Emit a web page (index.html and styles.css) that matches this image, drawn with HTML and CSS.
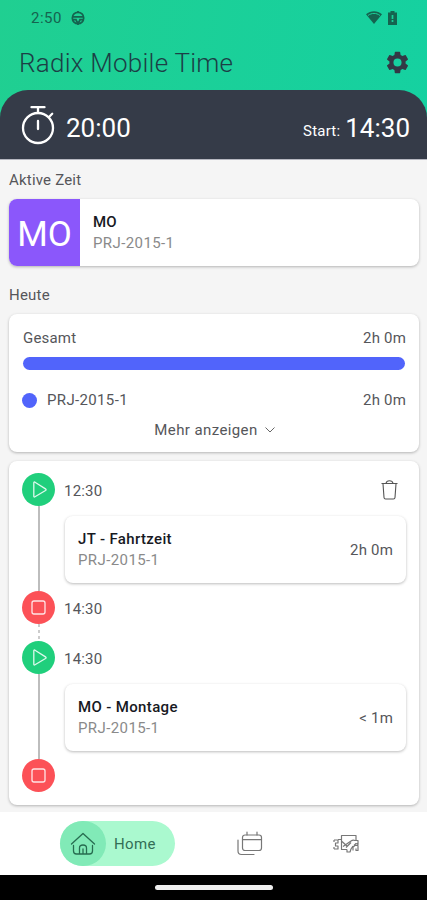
FILE: index.html
```html
<!DOCTYPE html>
<html lang="de">
<head>
<meta charset="utf-8">
<title>Radix Mobile Time</title>
<link rel="stylesheet" href="styles.css">
</head>
<body>
<div class="app">
  <header class="header">
    <div class="status">
      <span class="clock">2:50</span>
      <svg class="status-face" width="14" height="14" viewBox="0 0 14 14" fill="none" stroke="currentColor" stroke-width="1.7"><circle cx="7" cy="7" r="5.7"/><path d="M1.5 5.8h11M2 8.7h3l1 2.4h2l1-2.4h3M7 0v2M7 12v2"/></svg>
      <svg class="wifi" width="16" height="13" viewBox="0 0 16 13"><path d="M0 3.2C4.7-.9 11.3-.9 16 3.2L8 13z" fill="currentColor"/><path d="M2 4.5c3.8-2.8 8.2-2.8 12 0" fill="none" stroke="#1acf99" stroke-width="1"/></svg>
      <svg class="battery" width="9" height="14" viewBox="0 0 9 14"><path d="M2.5 0h4v1.5H9V14H0V1.5h2.5z" fill="currentColor"/><path d="M4.5 4v4M4.500 9v2" stroke="#1acf99" stroke-width="1.7"/></svg>
    </div>
    <div class="title-row">
      <h1>Radix Mobile Time</h1>
      <svg width="27" height="27" viewBox="0 0 24 24" fill="#333845"><path d="M19.14 12.94c.04-.3.06-.61.06-.94 0-.32-.02-.64-.07-.94l2.03-1.58a.49.49 0 0 0 .12-.61l-1.92-3.32a.49.49 0 0 0-.59-.22l-2.39.96c-.5-.38-1.03-.7-1.62-.94l-.36-2.54a.48.48 0 0 0-.48-.41h-3.84c-.24 0-.43.17-.47.41l-.36 2.54c-.59.24-1.13.57-1.62.94l-2.39-.96a.48.48 0 0 0-.59.22L2.74 8.87c-.12.21-.08.47.12.61l2.03 1.58c-.05.3-.09.63-.09.94s.02.64.07.94l-2.03 1.58a.49.49 0 0 0-.12.61l1.92 3.32c.12.22.37.29.59.22l2.39-.96c.5.38 1.03.7 1.62.94l.36 2.54c.05.24.24.41.48.41h3.84c.24 0 .44-.17.47-.41l.36-2.54c.59-.24 1.13-.56 1.62-.94l2.39.96c.22.08.47 0 .59-.22l1.92-3.32a.48.48 0 0 0-.12-.61zM12 15.6a3.6 3.6 0 1 1 0-7.2 3.6 3.6 0 0 1 0 7.2z"/></svg>
    </div>
    <div class="timer">
      <svg width="34" height="40" viewBox="0 0 34 40" fill="none" stroke="#fff" stroke-width="2.3" stroke-linecap="round"><circle cx="17" cy="23" r="15"/><path d="M10.500 2.200h13M17 3v5M28 12l3.200-3.200M17 16v8"/></svg>
      <span class="elapsed">20:00</span>
      <span class="start">Start:</span>
      <span class="start-time">14:30</span>
    </div>
  </header>
  <main class="content">
    <h2 class="label">Aktive Zeit</h2>
    <section class="card active">
      <div class="badge">MO</div>
      <div class="desc"><b>MO</b><span>PRJ-2015-1</span></div>
    </section>
    <h2 class="label today">Heute</h2>
    <section class="card summary">
      <div class="row"><span>Gesamt</span><span>2h 0m</span></div>
      <div class="bar"></div>
      <div class="row"><i class="dot"></i><span class="grow">PRJ-2015-1</span><span>2h 0m</span></div>
      <div class="more"><span>Mehr anzeigen</span><svg width="10" height="6" viewBox="0 0 10 6" fill="none" stroke="#666" stroke-width="1"><path d="M.5.500 5 5 9.500.5"/></svg></div>
    </section>
    <section class="card timeline">
      <div class="event">
        <svg class="node" viewBox="0 0 33 33"><circle cx="16.500" cy="16.500" r="16.500" fill="#20cf7c"/><path class="glyph" d="M11.800 9.800v13.400q0 1.300 1.200.6l10.500-6.300q1.200-.8 0-1.600L13 9.200q-1.200-.6-1.200.6z"/></svg>
        <span class="time">12:30</span>
        <svg width="17" height="20" viewBox="0 0 17 20" fill="none" stroke="#555" stroke-width="1.100"><path d="M.5 3.500h16M5 3.300Q5.500.8 8.500.8T12 3.300M2 3.700l1 13.800q.1 1.500 1.600 1.500h7.800q1.500 0 1.600-1.500l1-13.800"/></svg>
      </div>
      <div class="span">
        <div class="track"></div>
        <div class="card entry"><div class="desc"><b>JT - Fahrtzeit</b><span>PRJ-2015-1</span></div><span>2h 0m</span></div>
      </div>
      <div class="event">
        <svg class="node" viewBox="0 0 33 33"><circle cx="16.500" cy="16.500" r="16.500" fill="#fc5157"/><rect class="glyph" x="10" y="10" width="13" height="13" rx="2"/></svg>
        <span class="time">14:30</span>
      </div>
      <div class="gap"></div>
      <div class="event">
        <svg class="node" viewBox="0 0 33 33"><circle cx="16.500" cy="16.500" r="16.500" fill="#20cf7c"/><path class="glyph" d="M11.800 9.800v13.400q0 1.300 1.200.6l10.500-6.300q1.200-.8 0-1.600L13 9.200q-1.200-.6-1.200.6z"/></svg>
        <span class="time">14:30</span>
      </div>
      <div class="span">
        <div class="track"></div>
        <div class="card entry"><div class="desc"><b>MO - Montage</b><span>PRJ-2015-1</span></div><span>&lt; 1m</span></div>
      </div>
      <div class="event">
        <svg class="node" viewBox="0 0 33 33"><circle cx="16.500" cy="16.500" r="16.500" fill="#fc5157"/><rect class="glyph" x="10" y="10" width="13" height="13" rx="2"/></svg>
      </div>
    </section>
  </main>
  <nav class="tabs">
    <div class="home">
      <div class="home-icon"><svg width="26" height="24" viewBox="0 0 26 24" fill="none" stroke="#276c50" stroke-width="1.300" stroke-linecap="round" stroke-linejoin="round"><path d="M1.500 12 13 1.500 24.500 12M3.500 13.500V19q0 3 3 3h13q3 0 3-3v-5.500M9.500 22v-6q0-3 3.500-3t3.500 3v6M13 17v5"/></svg></div>
      <span>Home</span>
    </div>
    <svg class="calendar" width="26" height="25" viewBox="0 0 26 25" fill="none" stroke="#777" stroke-width="1.200" stroke-linecap="round"><rect x="5.500" y="4" width="19" height="15.500" rx="2.500"/><path d="M5.500 8.700h19M10 1v3M20 1v3M1 9v11q0 3.500 3.500 3.500H17"/></svg>
    <svg class="projects" width="26" height="22" viewBox="0 0 26 22" fill="none" stroke="#777" stroke-width="1.200" stroke-linejoin="round"><path d="M8.500 16.500v-14h14.500v4.500M1 7h4v3H2.500v3H5v3H1M1 7v2M1 14v2M8 6.500H5M8 16.500h6M9 8.500l5 4.500M10 13.500l8-5.500q2-1.500 4-.5h3v4l-2-1-2 2M18 9.500l-5 5M14 16.500v2.500h3l1-3 2-3M20 17.500v-3.500l2-1.500h3v5h-2v-2"/></svg>
  </nav>
  <footer class="system"><div class="handle"></div></footer>
</div>
</body>
</html>
```
FILE: styles.css
```css
* { box-sizing: border-box; }
body { margin: 0; background: #f5f5f5; color: #55565a; font: 15px/20px Roboto, "Liberation Sans", sans-serif; letter-spacing: .2px; }
.app { width: 427px; height: 900px; display: flex; flex-direction: column; overflow: hidden; }
.header { height: 160px; flex: none; background: linear-gradient(100deg, #20cf91, #15d1a1); border-bottom: 1px solid #b6b7c0; }
.status { height: 35px; display: flex; align-items: center; padding: 0 30px 0 31px; color: #15634f; }
.clock { font-size: 15px; letter-spacing: .5px; }
.status-face { margin-left: 9px; }
.wifi { margin-left: auto; }
.battery { margin-left: 6px; }
.title-row { height: 55px; display: flex; align-items: center; justify-content: space-between; padding: 0 16px 0 19px; }
h1 { margin: 0; font-size: 26px; line-height: 30px; font-weight: 300; color: #1c3f46; letter-spacing: .25px; }
.timer { height: 69px; display: flex; align-items: center; padding: 3px 17px 0 21px; border-radius: 28px 28px 0 0; background: #353b48; color: #fff; letter-spacing: 0; }
.timer svg { margin-top: -3px; }
.elapsed { margin: 4px 0 0 11px; font-size: 26px; line-height: 30px; }
.start { margin: 9px 5px 0 auto; font-size: 15px; letter-spacing: .2px; }
.start-time { margin-top: 4px; font-size: 26px; line-height: 30px; }
.content { height: 652px; flex: none; padding: 10px 8px 0 9px; }
.label { margin: 0 0 9px; font-size: 15px; line-height: 20px; font-weight: 400; }
.today { margin: 19px 0 9px; }
.card { background: #fff; border-radius: 8px; box-shadow: 0 1px 3px rgba(0,0,0,.27); }
.active { height: 67px; display: flex; align-items: center; overflow: hidden; }
.badge { width: 71px; height: 67px; display: flex; align-items: center; justify-content: center; background: #8b57fb; color: #fff; font-size: 35px; letter-spacing: 0; padding-top: 4px; }
.desc { display: flex; flex-direction: column; line-height: 21px; padding-top: 1px; }
.desc b { font-weight: 500; color: #17191f; }
.desc span { color: #8a8a8a; letter-spacing: .4px; }
.active .desc { margin-left: 13px; }
.summary { height: 138px; padding: 14px 13px 0 14px; }
.row { display: flex; align-items: center; justify-content: space-between; }
.bar { height: 13px; margin: 9px 1px 20px 0; border-radius: 7px; background: #5164fb; }
.dot { width: 15px; height: 15px; margin-left: -1px; border-radius: 50%; background: #5164fb; }
.grow { flex: 1; margin-left: 10px; letter-spacing: .35px; }
.more { margin-top: 10px; display: flex; justify-content: center; align-items: center; gap: 7px; letter-spacing: .4px; }
.timeline { height: 344px; margin-top: 9px; padding: 12px 13px 0; }
.event { height: 33px; display: flex; align-items: center; padding-right: 8px; }
.node { width: 33px; height: 33px; }
.glyph { fill: none; stroke: #fff; stroke-opacity: .85; stroke-width: 1.300; }
.time { flex: 1; margin-left: 9px; padding-top: 2px; }
.span { height: 85px; display: flex; }
.track { width: 2px; height: 85px; margin: 0 25px 0 16px; background: #bdbdbd; flex: none; }
.entry { flex: 1; height: 67px; margin-top: 10px; padding: 0 13px; display: flex; align-items: center; justify-content: space-between; }
.entry b { letter-spacing: .35px; }
.gap { width: 2px; height: 17px; margin-left: 16px; background: repeating-linear-gradient(#ccc 0 3px, #fff 3px 6px); }
.tabs { height: 63px; flex: none; background: #fff; display: flex; align-items: center; padding-left: 60px; }
.home { width: 115px; height: 45px; display: flex; align-items: center; border-radius: 23px; background: #aaf9cf; color: #326e56; }
.home-icon { width: 46px; height: 45px; border-radius: 23px; background: #81eab7; display: flex; align-items: center; justify-content: center; }
.home span { margin-left: 8px; letter-spacing: .4px; }
.calendar { margin-left: 62px; }
.projects { margin-left: 70px; }
.system { flex: 1; background: #000; padding-top: 10px; }
.handle { width: 118px; height: 5px; margin: 0 auto; border-radius: 3px; background: #eee; }
```
